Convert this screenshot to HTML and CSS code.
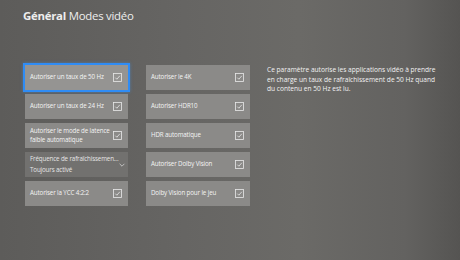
FILE: index.html
```html
<!DOCTYPE html>
<html lang="fr">
<head>
<meta charset="utf-8">
<link rel="stylesheet" href="styles.css">
</head>
<body>
<div class="screen">
  <h1 class="title"><b>Général</b> Modes vidéo</h1>
  <div class="main">
    <div class="col col1">
      <div class="tile focused"><span class="label">Autoriser un taux de 50 Hz</span><span class="cb"><svg viewBox="0 0 10 10"><rect x="0.6" y="0.6" width="8.8" height="8.8" fill="none" stroke="currentColor" stroke-width="0.9"/><path d="M2.6 5.2 L4.3 6.9 L7.6 3.1" fill="none" stroke="currentColor" stroke-width="0.9"/></svg></span></div>
      <div class="tile"><span class="label">Autoriser un taux de 24 Hz</span><span class="cb"><svg viewBox="0 0 10 10"><rect x="0.6" y="0.6" width="8.8" height="8.8" fill="none" stroke="currentColor" stroke-width="0.9"/><path d="M2.6 5.2 L4.3 6.9 L7.6 3.1" fill="none" stroke="currentColor" stroke-width="0.9"/></svg></span></div>
      <div class="tile"><span class="label">Autoriser le mode de latence faible automatique</span><span class="cb"><svg viewBox="0 0 10 10"><rect x="0.6" y="0.6" width="8.8" height="8.8" fill="none" stroke="currentColor" stroke-width="0.9"/><path d="M2.6 5.2 L4.3 6.9 L7.6 3.1" fill="none" stroke="currentColor" stroke-width="0.9"/></svg></span></div>
      <div class="tile dropdown"><span class="label"><span class="line">Fréquence de rafraîchissemen...</span><span class="line">Toujours activé</span></span><span class="chev"><svg viewBox="0 0 10 10"><path d="M2 3.5 L5 6.5 L8 3.5" fill="none" stroke="currentColor" stroke-width="0.9"/></svg></span></div>
      <div class="tile"><span class="label">Autoriser la YCC 4:2:2</span><span class="cb"><svg viewBox="0 0 10 10"><rect x="0.6" y="0.6" width="8.8" height="8.8" fill="none" stroke="currentColor" stroke-width="0.9"/><path d="M2.6 5.2 L4.3 6.9 L7.6 3.1" fill="none" stroke="currentColor" stroke-width="0.9"/></svg></span></div>
    </div>
    <div class="col col2">
      <div class="tile"><span class="label">Autoriser le 4K</span><span class="cb"><svg viewBox="0 0 10 10"><rect x="0.6" y="0.6" width="8.8" height="8.8" fill="none" stroke="currentColor" stroke-width="0.9"/><path d="M2.6 5.2 L4.3 6.9 L7.6 3.1" fill="none" stroke="currentColor" stroke-width="0.9"/></svg></span></div>
      <div class="tile"><span class="label">Autoriser HDR10</span><span class="cb"><svg viewBox="0 0 10 10"><rect x="0.6" y="0.6" width="8.8" height="8.8" fill="none" stroke="currentColor" stroke-width="0.9"/><path d="M2.6 5.2 L4.3 6.9 L7.6 3.1" fill="none" stroke="currentColor" stroke-width="0.9"/></svg></span></div>
      <div class="tile"><span class="label">HDR automatique</span><span class="cb"><svg viewBox="0 0 10 10"><rect x="0.6" y="0.6" width="8.8" height="8.8" fill="none" stroke="currentColor" stroke-width="0.9"/><path d="M2.6 5.2 L4.3 6.9 L7.6 3.1" fill="none" stroke="currentColor" stroke-width="0.9"/></svg></span></div>
      <div class="tile"><span class="label">Autoriser Dolby Vision</span><span class="cb"><svg viewBox="0 0 10 10"><rect x="0.6" y="0.6" width="8.8" height="8.8" fill="none" stroke="currentColor" stroke-width="0.9"/><path d="M2.6 5.2 L4.3 6.9 L7.6 3.1" fill="none" stroke="currentColor" stroke-width="0.9"/></svg></span></div>
      <div class="tile"><span class="label">Dolby Vision pour le jeu</span><span class="cb"><svg viewBox="0 0 10 10"><rect x="0.6" y="0.6" width="8.8" height="8.8" fill="none" stroke="currentColor" stroke-width="0.9"/><path d="M2.6 5.2 L4.3 6.9 L7.6 3.1" fill="none" stroke="currentColor" stroke-width="0.9"/></svg></span></div>
    </div>
    <p class="desc">Ce paramètre autorise les applications vidéo à prendre en charge un taux de rafraîchissement de 50 Hz quand du contenu en 50 Hz est lu.</p>
  </div>
</div>
</body>
</html>
```
FILE: styles.css
```css
html, body {
  margin: 0;
  padding: 0;
}
body {
  width: 460px;
  height: 260px;
  overflow: hidden;
  font-family: "Open Sans", "Noto Sans", sans-serif;
  color: #f2f2f2;
}
.screen {
  width: 460px;
  height: 260px;
  background: linear-gradient(90deg, #5d5c5a 0%, #666563 40%, #6b6a67 65%, #636260 88%, #555452 100%);
  padding: 7px 0 0 23px;
  box-sizing: border-box;
}
.title {
  margin: 0;
  font-size: 11.4px;
  font-weight: 400;
  line-height: 18px;
  letter-spacing: -0.25px;
  color: #eeeeee;
}
.title b {
  font-weight: 700;
}
.main {
  display: flex;
  align-items: flex-start;
  margin-top: 40px;
  margin-left: 2px;
}
.col {
  display: flex;
  flex-direction: column;
  gap: 4px;
}
.col1 {
  width: 103px;
}
.col2 {
  width: 104px;
  margin-left: 18px;
}
.tile {
  height: 25px;
  box-sizing: border-box;
  background: #8b8a88;
  display: flex;
  align-items: center;
  justify-content: space-between;
  padding: 0 5px 0 5px;
  font-size: 6.2px;
  line-height: 8.5px;
  letter-spacing: -0.12px;
  color: #f4f4f4;
}
.tile.focused {
  background: #959492;
  outline: 2px solid #2f8cf5;
  outline-offset: 0;
  box-shadow: 0 0 3px 2px rgba(60, 150, 255, 0.45);
}
.tile.dropdown {
  background: #72716f;
  color: #e6e6e6;
}
.label {
  display: flex;
  flex-direction: column;
  gap: 1px;
  max-width: 84px;
}
.dropdown .label {
  max-width: none;
  gap: 3px;
  white-space: nowrap;
}
.cb {
  width: 9px;
  height: 9px;
  flex: none;
  color: #e8e8e8;
  margin-right: 1px;
}
.cb svg, .chev svg {
  display: block;
  width: 100%;
  height: 100%;
}
.chev {
  width: 8px;
  height: 8px;
  flex: none;
  color: #dddddd;
  margin-right: 2px;
}
.desc {
  margin: 0 0 0 17px;
  width: 170px;
  font-size: 6.6px;
  line-height: 9.5px;
  color: #f2f2f2;
}
```
